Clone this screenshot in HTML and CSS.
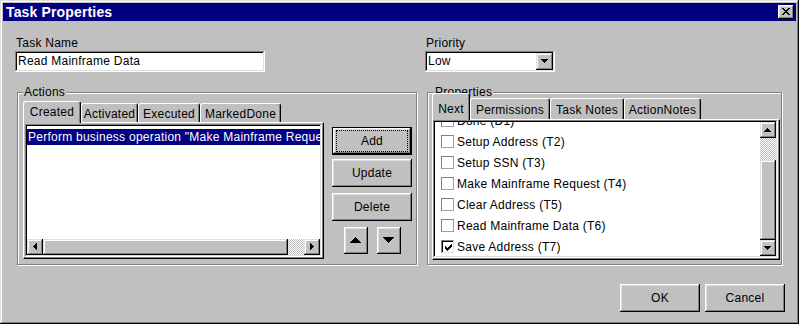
FILE: index.html
```html
<!DOCTYPE html>
<html>
<head>
<meta charset="utf-8">
<title>Task Properties</title>
<link rel="stylesheet" href="styles.css">
</head>
<body>
<div class="window">
  <div class="titlebar">
    <span class="title">Task Properties</span>
    <span class="close-btn"><svg width="8" height="7" viewBox="0 0 8 7" shape-rendering="crispEdges"><path d="M0 0h2v1H0z M6 0h2v1H6z M1 1h2v1H1z M5 1h2v1H5z M2 2h4v1H2z M3 3h2v1H3z M2 4h4v1H2z M1 5h2v1H1z M5 5h2v1H5z M0 6h2v1H0z M6 6h2v1H6z" fill="#000"/></svg></span>
  </div>
  <div class="content">
    <div class="fields">
      <div class="field field-name">
        <span class="label">Task Name</span>
        <div class="textbox">Read Mainframe Data</div>
      </div>
      <div class="field field-priority">
        <span class="label">Priority</span>
        <div class="combo">
          <span class="combo-text">Low</span>
          <span class="combo-btn"><svg width="7" height="4" viewBox="0 0 7 4" shape-rendering="crispEdges"><path d="M0 0h7v1H0z M1 1h5v1H1z M2 2h3v1H2z M3 3h1v1H3z" fill="#000"/></svg></span>
        </div>
      </div>
    </div>

    <div class="groups">
      <div class="group group-actions">
        <span class="legend">Actions</span>
        <div class="actions-body">
          <div class="tabs-col">
            <div class="tabstrip tabstrip-actions">
              <span class="tab tab-active w-created">Created</span>
              <span class="tab w-activated">Activated</span>
              <span class="tab w-executed">Executed</span>
              <span class="tab w-marked">MarkedDone</span>
            </div>
            <div class="panel panel-actions">
              <div class="listbox">
                <div class="list-row selected">Perform business operation "Make Mainframe Request"</div>
                <div class="hscroll">
                  <span class="sb-btn"><svg width="4" height="7" viewBox="0 0 4 7" shape-rendering="crispEdges"><path d="M0 3h1v1H0z M1 2h1v3H1z M2 1h1v5H2z M3 0h1v7H3z" fill="#000"/></svg></span>
                  <span class="sb-thumb h-thumb"></span>
                  <span class="sb-track"></span>
                  <span class="sb-btn"><svg width="4" height="7" viewBox="0 0 4 7" shape-rendering="crispEdges"><path d="M0 0h1v7H0z M1 1h1v5H1z M2 2h1v3H2z M3 3h1v1H3z" fill="#000"/></svg></span>
                </div>
              </div>
            </div>
          </div>
          <div class="btn-col">
            <button class="btn btn-default"><span class="focus">Add</span></button>
            <button class="btn btn-update">Update</button>
            <button class="btn btn-delete">Delete</button>
            <div class="arrow-row">
              <button class="btn arrow-btn"><svg width="11" height="6" viewBox="0 0 11 6" shape-rendering="crispEdges"><path d="M5 0h1v1H5z M4 1h3v1H4z M3 2h5v1H3z M2 3h7v1H2z M1 4h9v1H1z M0 5h11v1H0z" fill="#000"/></svg></button>
              <button class="btn arrow-btn"><svg width="11" height="6" viewBox="0 0 11 6" shape-rendering="crispEdges"><path d="M0 0h11v1H0z M1 1h9v1H1z M2 2h7v1H2z M3 3h5v1H3z M4 4h3v1H4z M5 5h1v1H5z" fill="#000"/></svg></button>
            </div>
          </div>
        </div>
      </div>

      <div class="group group-props">
        <span class="legend">Properties</span>
        <div class="tabstrip tabstrip-props">
          <span class="tab tab-active w-next">Next</span>
          <span class="tab w-perm">Permissions</span>
          <span class="tab w-notes">Task Notes</span>
          <span class="tab w-anotes">ActionNotes</span>
        </div>
        <div class="panel panel-props">
          <div class="listbox listbox-props">
            <div class="checklist">
              <div class="checklist-inner">
                <div class="check-row"><span class="checkbox"></span><span>Done (D1)</span></div>
                <div class="check-row"><span class="checkbox"></span><span>Setup Address (T2)</span></div>
                <div class="check-row"><span class="checkbox"></span><span>Setup SSN (T3)</span></div>
                <div class="check-row"><span class="checkbox"></span><span>Make Mainframe Request (T4)</span></div>
                <div class="check-row"><span class="checkbox"></span><span>Clear Address (T5)</span></div>
                <div class="check-row"><span class="checkbox"></span><span>Read Mainframe Data (T6)</span></div>
                <div class="check-row"><span class="checkbox checked"><svg width="7" height="7" viewBox="0 0 7 7" shape-rendering="crispEdges"><path d="M6 0h1v1H6z M5 1h2v1H5z M0 2h1v1H0z M4 2h3v1H4z M0 3h2v1H0z M3 3h3v1H3z M0 4h5v1H0z M1 5h3v1H1z M2 6h1v1H2z" fill="#000"/></svg></span><span>Save Address (T7)</span></div>
              </div>
            </div>
            <div class="vscroll">
              <span class="sb-btn"><svg width="7" height="4" viewBox="0 0 7 4" shape-rendering="crispEdges"><path d="M3 0h1v1H3z M2 1h3v1H2z M1 2h5v1H1z M0 3h7v1H0z" fill="#000"/></svg></span>
              <span class="sb-track"></span>
              <span class="sb-thumb v-thumb"></span>
              <span class="sb-btn"><svg width="7" height="4" viewBox="0 0 7 4" shape-rendering="crispEdges"><path d="M0 0h7v1H0z M1 1h5v1H1z M2 2h3v1H2z M3 3h1v1H3z" fill="#000"/></svg></span>
            </div>
          </div>
        </div>
      </div>
    </div>

    <div class="footer">
      <button class="btn footer-btn">OK</button>
      <button class="btn footer-btn">Cancel</button>
    </div>
  </div>
</div>
</body>
</html>
```

FILE: styles.css
```css
* { box-sizing: border-box; }

html, body {
  margin: 0;
  padding: 0;
}

body {
  width: 799px;
  height: 324px;
  overflow: hidden;
  background: #c0c0c0;
  font-family: "Liberation Sans", Arial, sans-serif;
  font-size: 12px;
  letter-spacing: 0.25px;
  color: #000;
}

.window {
  width: 799px;
  height: 324px;
  padding: 3px;
  background: #c0c0c0;
  box-shadow: inset -1px -1px #000, inset 1px 1px #dfdfdf, inset -2px -2px #808080, inset 2px 2px #fff;
  display: flex;
  flex-direction: column;
}

.titlebar {
  height: 18px;
  background: #000080;
  display: flex;
  align-items: center;
  justify-content: space-between;
  padding: 0 2px 0 3px;
}

.title {
  color: #fff;
  font-weight: bold;
  font-size: 14px;
  letter-spacing: 0.15px;
  line-height: 18px;
}

.close-btn {
  width: 16px;
  height: 14px;
  background: #c0c0c0;
  box-shadow: inset -1px -1px #000, inset 1px 1px #fff, inset -2px -2px #808080, inset 2px 2px #dfdfdf;
  display: flex;
  align-items: center;
  justify-content: center;
  padding: 0 1px 1px 0;
}

.close-btn svg, .sb-btn svg, .combo-btn svg, .arrow-btn svg, .checkbox svg { display: block; }

.content {
  flex: 1;
  padding: 15px 11px 0 12px;
  display: flex;
  flex-direction: column;
}

.fields {
  display: flex;
}

.field-name { width: 250px; }
.field-priority { width: 130px; margin-left: 160px; }

.label {
  display: block;
  line-height: 14px;
  margin-bottom: 1px;
  padding-left: 1px;
}

.textbox, .combo, .listbox {
  background: #fff;
  box-shadow: inset -1px -1px #fff, inset 1px 1px #808080, inset -2px -2px #dfdfdf, inset 2px 2px #000;
}

.textbox {
  height: 21px;
  line-height: 21px;
  padding: 0 3px;
  white-space: nowrap;
}

.combo {
  height: 21px;
  padding: 2px;
  display: flex;
}

.combo-text {
  flex: 1;
  line-height: 17px;
  padding-left: 1px;
}

.combo-btn {
  width: 17px;
  height: 17px;
  background: #c0c0c0;
  box-shadow: inset -1px -1px #000, inset 1px 1px #dfdfdf, inset -2px -2px #808080, inset 2px 2px #fff;
  display: flex;
  align-items: center;
  justify-content: center;
  padding: 0 1px 1px 0;
}

.groups {
  display: flex;
  margin-top: 20px;
  margin-left: 2px;
}

.group {
  position: relative;
  border: 1px solid #808080;
  box-shadow: 1px 1px #fff, inset 1px 1px #fff;
}

.legend {
  position: absolute;
  top: -8px;
  line-height: 14px;
  padding: 0 1px;
  background: #c0c0c0;
}

.group-actions {
  width: 400px;
  padding: 8px 5px 5px 5px;
}

.group-actions .legend { left: 5px; }

.group-props {
  width: 355px;
  margin-left: 10px;
  padding: 0 1px 4px 4px;
}

.group-props .legend { left: 6px; }

.actions-body {
  display: flex;
}

.tabs-col {
  width: 301px;
}

.tabstrip {
  display: flex;
  align-items: flex-end;
  position: relative;
  z-index: 1;
}

.tabstrip-actions { height: 21px; }
.tabstrip-props { height: 26px; }

.tab {
  height: 19px;
  padding-top: 1px;
  background: #c0c0c0;
  border-left: 1px solid #fff;
  border-top: 1px solid #fff;
  border-right: 1px solid #000;
  border-radius: 3px 3px 0 0;
  box-shadow: inset -1px 0 #808080;
  display: flex;
  align-items: center;
  justify-content: center;
  white-space: nowrap;
}

.tabstrip-props .tab {
  height: 21px;
  padding-top: 2px;
}

.tab-active {
  height: 22px;
  margin-bottom: -1px;
  padding-top: 0;
  padding-bottom: 2px;
}

.tabstrip-props .tab-active {
  height: 27px;
  padding-top: 4px;
  padding-bottom: 0;
}

.w-created { width: 58px; }
.w-activated { width: 57px; }
.w-executed { width: 62px; }
.w-marked { width: 81px; }
.w-next { width: 38px; }
.w-perm { width: 80px; }
.w-notes { width: 74px; }
.w-anotes { width: 77px; }

.panel {
  background: #c0c0c0;
  border: 1px solid;
  border-color: #fff #000 #000 #fff;
  box-shadow: inset -1px -1px #808080;
}

.panel-actions {
  height: 137px;
  padding: 1px;
}

.panel-props {
  height: 141px;
  padding: 0 1px 1px 0;
}

.listbox {
  height: 100%;
  padding: 2px;
  display: flex;
  flex-direction: column;
  overflow: hidden;
}

.list-row {
  height: 16px;
  line-height: 16px;
  margin-top: 3px;
  padding-left: 1px;
  white-space: nowrap;
  overflow: hidden;
}

.list-row.selected {
  background: #000080;
  color: #fff;
}

.hscroll {
  margin-top: auto;
  height: 16px;
  display: flex;
}

.sb-btn, .sb-thumb {
  background: #c0c0c0;
  box-shadow: inset -1px -1px #000, inset 1px 1px #dfdfdf, inset -2px -2px #808080, inset 2px 2px #fff;
}

.sb-btn {
  width: 16px;
  height: 16px;
  flex: none;
  display: flex;
  align-items: center;
  justify-content: center;
  padding: 0 1px 1px 0;
}

.sb-track {
  flex: 1;
  background-color: #fff;
  background-image: repeating-conic-gradient(#c0c0c0 0 25%, #fff 0 50%);
  background-size: 2px 2px;
}

.h-thumb { width: 245px; flex: none; }

.btn-col {
  width: 80px;
  margin-left: 8px;
  padding-top: 26px;
  display: flex;
  flex-direction: column;
}

.btn {
  font-family: inherit;
  font-size: 12px;
  letter-spacing: 0.25px;
  color: #000;
  background: #c0c0c0;
  border: none;
  margin: 0;
  padding: 0;
  box-shadow: inset -1px -1px #000, inset 1px 1px #fff, inset -2px -2px #808080, inset 2px 2px #dfdfdf;
  display: flex;
  align-items: center;
  justify-content: center;
}

.btn-col > .btn {
  width: 80px;
  height: 28px;
}

.btn-default {
  border: 1px solid #000;
  padding: 2px 3px 2px 3px;
}

.focus {
  flex: 1;
  align-self: stretch;
  border: 1px dotted #000;
  display: flex;
  align-items: center;
  justify-content: center;
}

.btn-update { margin-top: 4px; }
.btn-delete { margin-top: 6px; }

.arrow-row {
  margin-top: 6px;
  display: flex;
  justify-content: center;
  gap: 9px;
  padding-left: 1px;
}

.arrow-btn {
  width: 24px;
  height: 27px;
  padding: 0 1px 1px 0;
}

.listbox-props {
  flex-direction: row;
}

.checklist {
  flex: 1;
  overflow: hidden;
  padding-left: 6px;
}

.checklist-inner {
  margin-top: -12px;
}

.check-row {
  height: 21px;
  display: flex;
  align-items: center;
  gap: 3px;
  white-space: nowrap;
}

.checkbox {
  width: 13px;
  height: 13px;
  flex: none;
  background: #fff;
  border: 1px solid #808080;
  border-right-color: #a0a0a0;
  border-bottom-color: #a0a0a0;
}

.checkbox.checked {
  border-color: #808080 #dfdfdf #dfdfdf #808080;
  box-shadow: inset 1px 1px #000;
  display: flex;
  align-items: center;
  justify-content: center;
  padding: 1px 0 0 1px;
}

.vscroll {
  width: 16px;
  flex: none;
  display: flex;
  flex-direction: column;
}

.vscroll .sb-track { flex: 1; }
.v-thumb { height: 80px; flex: none; }

.footer {
  margin-top: 19px;
  display: flex;
  justify-content: flex-end;
  gap: 5px;
}

.footer-btn {
  width: 80px;
  height: 28px;
}
```
